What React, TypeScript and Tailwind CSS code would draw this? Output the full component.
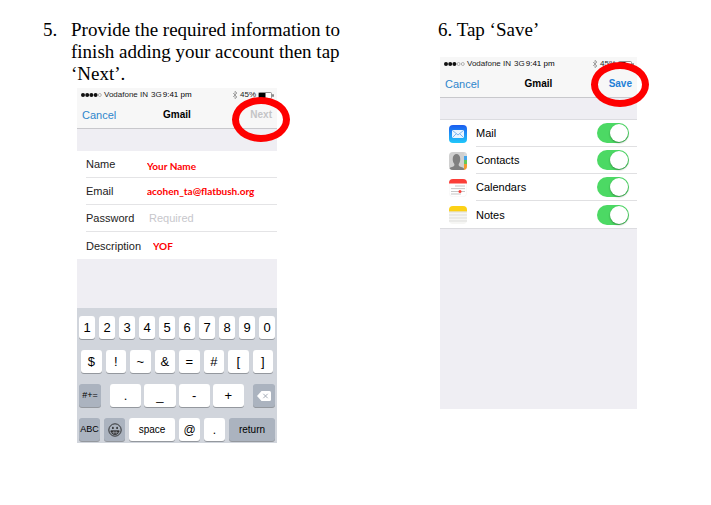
import React from 'react';

const sans = "font-['Liberation_Sans',Arial,sans-serif]";

function StatusBar({ filled }: { filled: number }) {
  return (
    <div className="flex h-3.5 items-center pr-[3px] pl-1 text-[8px] leading-[14px] text-[#222]">
      <svg className="h-1.5 w-[21px]" viewBox="0 0 21 6" aria-hidden="true">
        {[0, 1, 2, 3, 4].map((i) => (
          <circle
            key={i}
            cx={2 + i * 4.2}
            cy="3"
            r={i < filled ? 2 : 1.5}
            fill={i < filled ? '#111' : 'none'}
            stroke={i < filled ? 'none' : '#888'}
            strokeWidth="0.6"
          />
        ))}
      </svg>
      <span className="ml-0.5">Vodafone IN</span>
      <span className="ml-[3px]">3G</span>
      <span className="ml-px text-black">9:41 pm</span>
      <svg className="ml-auto h-2 w-1.5" viewBox="0 0 6 8" aria-hidden="true">
        <path d="M1 2l4 4-2 1.7V.3L5 2 1 6" fill="none" stroke="#888" strokeWidth="0.7" />
      </svg>
      <span className="ml-0.5">45%</span>
      <svg className="ml-0.5 h-[7px] w-4" viewBox="0 0 16 7" aria-hidden="true">
        <rect x="0.5" y="0.5" width="13" height="6" rx="1" fill="#fff" stroke="#777" strokeWidth="0.8" />
        <rect x="1" y="1" width="6.5" height="5" fill="#000" />
        <path d="M15 2.3v2.4" stroke="#444" strokeWidth="1.2" />
      </svg>
    </div>
  );
}

function NavBar({ action, tone, ring }: { action: string; tone: string; ring: string }) {
  return (
    <div className="grid h-[27px] grid-cols-3 items-center border-b border-[#c8c8cc] px-[5px]">
      <button type="button" className="justify-self-start text-[11px] leading-4 text-[#2f86cc]">
        Cancel
      </button>
      <h2 className="text-center text-[10px] leading-4 font-bold text-black">Gmail</h2>
      <div className="relative justify-self-end">
        <button type="button" className={`block text-[10px] leading-4 font-bold ${tone}`}>
          {action}
        </button>
        <span
          className={`pointer-events-none absolute left-1/2 h-[45px] w-[58px] -translate-x-1/2 rounded-[50%] border-[7px] border-[#fe0000] ${ring}`}
        />
      </div>
    </div>
  );
}

const fields = [
  { id: 'name', label: 'Name', value: 'Your Name', pad: 'pl-0 pt-1' },
  { id: 'email', label: 'Email', value: 'acohen_ta@flatbush.org', pad: 'pl-0' },
  { id: 'password', label: 'Password', value: '', pad: 'pl-0.5' },
  { id: 'description', label: 'Description', value: 'YOF', pad: 'pl-1.5' },
];

function AccountForm() {
  return (
    <form className="bg-white pl-[9px]">
      {fields.map((f, i) => (
        <div
          key={f.id}
          className={`flex h-[27px] items-center ${i < fields.length - 1 ? 'border-b border-[#e4e4e6]' : ''}`}
        >
          <label htmlFor={f.id} className="w-[61px] shrink-0 text-[11px] leading-4 text-[#222]">
            {f.label}
          </label>
          <input
            id={f.id}
            type={f.id === 'password' ? 'password' : 'text'}
            defaultValue={f.value}
            placeholder={f.id === 'password' ? 'Required' : undefined}
            className={`min-w-0 flex-1 bg-transparent leading-4 outline-none placeholder:text-[#c7c7cc] ${f.pad} ${
              f.id === 'password' ? 'text-[11px]' : 'font-[Lato,sans-serif] text-[10px] font-bold text-[#fe0000]'
            }`}
          />
        </div>
      ))}
    </form>
  );
}

function Key({ children, className = 'flex-1', dark = false, label }: {
  children: React.ReactNode;
  className?: string;
  dark?: boolean;
  label?: string;
}) {
  return (
    <button
      type="button"
      aria-label={label}
      className={`flex h-[23px] min-w-0 items-center justify-center rounded-[3px] text-black shadow-[0_1px_0_#94989e] ${
        dark ? 'bg-[#abb3bf]' : 'bg-white'
      } ${className}`}
    >
      {children}
    </button>
  );
}

function Keyboard() {
  return (
    <div className="flex flex-col gap-[11px] bg-[#d1d5dc] px-0.5 pt-2 pb-0.5">
      <div className="flex gap-1 text-[13px]">
        {[...'1234567890'].map((k) => (
          <Key key={k}>{k}</Key>
        ))}
      </div>
      <div className="flex gap-1 px-0.5 text-[13px]">
        {[...'$!~&=#[]'].map((k) => (
          <Key key={k}>{k}</Key>
        ))}
      </div>
      <div className="flex text-[13px]">
        <Key dark className="w-[22px] text-[9px]">#+=</Key>
        <div className="mx-[9px] flex flex-1 gap-[3px]">
          {[...'._-+'].map((k) => (
            <Key key={k}>{k}</Key>
          ))}
        </div>
        <Key dark className="w-[22px]" label="Delete">
          <svg className="h-2.5 w-3.5" viewBox="0 0 14 10" aria-hidden="true">
            <path d="M4.5 0H12.5Q14 0 14 1.5V8.5Q14 10 12.5 10H4.5L0 5Z" fill="#fff" />
            <path d="M6.3 2.8l4.4 4.4M10.7 2.8L6.3 7.2" stroke="#9ba3af" strokeWidth="0.9" />
          </svg>
        </Key>
      </div>
      <div className="flex gap-1 text-[10px]">
        <Key dark className="w-[21px] text-[9px]">ABC</Key>
        <Key dark className="w-[21px]" label="Emoji">
          <svg className="size-[14px]" viewBox="0 0 14 14" fill="none" stroke="#222" aria-hidden="true">
            <circle cx="7" cy="7" r="6.2" strokeWidth="0.9" />
            <path d="M2.8 7.8h8.4C11 10.2 9.3 11.6 7 11.6S3 10.2 2.8 7.8Z" fill="#333" strokeWidth="0.7" />
            <path d="M3.6 9.4h6.8M5.5 8.2v2.8M7 8.2v3M8.5 8.2v2.8" stroke="#c5cad4" strokeWidth="0.4" />
            <ellipse cx="4.9" cy="4.9" rx="0.8" ry="1.2" fill="#222" stroke="none" />
            <ellipse cx="9.1" cy="4.9" rx="0.8" ry="1.2" fill="#222" stroke="none" />
          </svg>
        </Key>
        <Key className="flex-1">space</Key>
        <Key className="w-[21px] text-[12px]">@</Key>
        <Key className="w-[21px] text-[12px]">.</Key>
        <Key dark className="w-[46px]">return</Key>
      </div>
    </div>
  );
}

function MailIcon() {
  return (
    <svg className="size-[18px]" viewBox="0 0 18 18" aria-hidden="true">
      <defs>
        <linearGradient id="mail-sky" x1="0" y1="0" x2="0" y2="1">
          <stop offset="0" stopColor="#1b5cf0" />
          <stop offset="1" stopColor="#20c8fa" />
        </linearGradient>
      </defs>
      <rect width="18" height="18" rx="4" fill="url(#mail-sky)" />
      <rect x="3" y="5" width="12" height="8" rx="0.8" fill="#eaf5ff" />
      <path d="M3.3 5.3L9 10l5.7-4.7M3.3 12.7l4-4M14.7 12.7l-4-4" fill="none" stroke="#4a9be8" strokeWidth="0.7" />
    </svg>
  );
}

function ContactsIcon() {
  return (
    <svg className="size-[18px]" viewBox="0 0 18 18" aria-hidden="true">
      <defs>
        <clipPath id="contacts-tile">
          <rect width="18" height="18" rx="4" />
        </clipPath>
      </defs>
      <g clipPath="url(#contacts-tile)">
        <rect width="18" height="18" fill="#d0d0d0" />
        <path d="M0 18v-1.5c1.5-1.5 4.5-1.5 5.3-3 .4-.8 0-1.5-.4-2.3C3 9 3.2 2 7.5 2S12 9 10.2 11.2c-.4.8-.8 1.5-.4 2.3.8 1.5 3.7 1.5 5.2 3V18Z" fill="#808080" />
        <rect x="15" width="3" height="4" fill="#d8d8d8" />
        <rect x="15" y="4" width="3" height="4" fill="#45a5e8" />
        <rect x="15" y="8" width="3" height="4" fill="#63c95b" />
        <rect x="15" y="12" width="3" height="6" fill="#f39b2e" />
      </g>
    </svg>
  );
}

const calendarDots = [
  [7, 7], [9, 7], [11, 7], [13, 7], [15, 7],
  [3, 9.7], [5, 9.7], [7, 9.7], [9, 9.7], [11, 9.7], [13, 9.7], [15, 9.7],
  [3, 12.4], [5, 12.4], [7, 12.4], [9, 12.4], [13, 12.4], [15, 12.4],
  [3, 15], [5, 15], [7, 15], [9, 15], [11, 15],
];

function CalendarIcon() {
  return (
    <svg className="size-[18px]" viewBox="0 0 18 18" aria-hidden="true">
      <rect x="0.2" y="0.2" width="17.6" height="17.6" rx="4" fill="#fff" stroke="#ececec" strokeWidth="0.4" />
      <path d="M0 4.5V4a4 4 0 0 1 4-4h10a4 4 0 0 1 4 4v.5Z" fill="#fb3e38" />
      {calendarDots.map(([x, y]) => (
        <rect key={`${x}-${y}`} x={x - 0.6} y={y - 0.4} width="1.2" height="0.8" fill="#888" />
      ))}
      <circle cx="11" cy="12.4" r="1.5" fill="#fb3e38" />
    </svg>
  );
}

function NotesIcon() {
  return (
    <svg className="size-[18px]" viewBox="0 0 18 18" aria-hidden="true">
      <rect width="18" height="18" rx="4" fill="#f6f6f4" />
      <path d="M0 5.5V4a4 4 0 0 1 4-4h10a4 4 0 0 1 4 4v1.5Z" fill="#fcd116" />
      <path d="M0 6h18M0 9h18M0 12h18M0 15h18" stroke="#d2d2d0" strokeWidth="0.7" />
    </svg>
  );
}

const services = [
  { id: 'mail', label: 'Mail', Icon: MailIcon },
  { id: 'contacts', label: 'Contacts', Icon: ContactsIcon },
  { id: 'calendars', label: 'Calendars', Icon: CalendarIcon },
  { id: 'notes', label: 'Notes', Icon: NotesIcon },
];

function ServiceList() {
  return (
    <ul className="border-y border-[#dcdce0] bg-white pl-[9px]">
      {services.map(({ id, label, Icon }, i) => (
        <li key={id} className="flex h-[27px] items-center gap-[9px]">
          <Icon />
          <div
            className={`flex h-full flex-1 items-center justify-between pr-2 ${
              i < services.length - 1 ? 'border-b border-[#e0e0e2]' : ''
            }`}
          >
            <label htmlFor={id} className="text-[11px] leading-4 text-black">
              {label}
            </label>
            <input
              id={id}
              type="checkbox"
              role="switch"
              defaultChecked
              className="flex h-5 w-8 appearance-none items-center rounded-full bg-[#ddd] p-px before:size-[18px] before:rounded-full before:bg-white before:shadow-[0_1px_2px_rgba(0,0,0,0.35)] checked:justify-end checked:bg-[#4cd964]"
            />
          </div>
        </li>
      ))}
    </ul>
  );
}

export default function App() {
  return (
    <main className="grid min-h-screen grid-cols-[2fr_1fr] items-start bg-white pt-[19px] pr-[74px] pl-10 font-['Liberation_Serif','Times_New_Roman',serif] text-black">
      <section className="pl-[3px]">
        <h1 className="flex text-[19px] leading-[22px]">
          <span className="w-7 shrink-0">5.</span>
          <span className="max-w-[272px]">Provide the required information to finish adding your account then tap ‘Next’.</span>
        </h1>
        <div className={`mt-[3px] ml-[34px] w-[200px] bg-[#efeef3] ${sans}`}>
          <div className="bg-[#f7f7f7]">
            <StatusBar filled={4} />
            <NavBar action="Next" tone="text-[#c4c4c6]" ring="-top-2.5" />
          </div>
          <div className="pt-[22px] pb-[49px]">
            <AccountForm />
          </div>
          <Keyboard />
        </div>
      </section>

      <section>
        <h1 className="text-[19px] leading-[22px]">6. Tap ‘Save’</h1>
        <div className={`mt-4 ml-0.5 bg-[#efeef3] pb-[180px] ${sans}`}>
          <div className="bg-[#f7f7f7]">
            <StatusBar filled={3} />
            <NavBar action="Save" tone="text-[#1f7fd6]" ring="-top-3.5" />
          </div>
          <div className="pt-[21px]">
            <ServiceList />
          </div>
        </div>
      </section>
    </main>
  );
}
